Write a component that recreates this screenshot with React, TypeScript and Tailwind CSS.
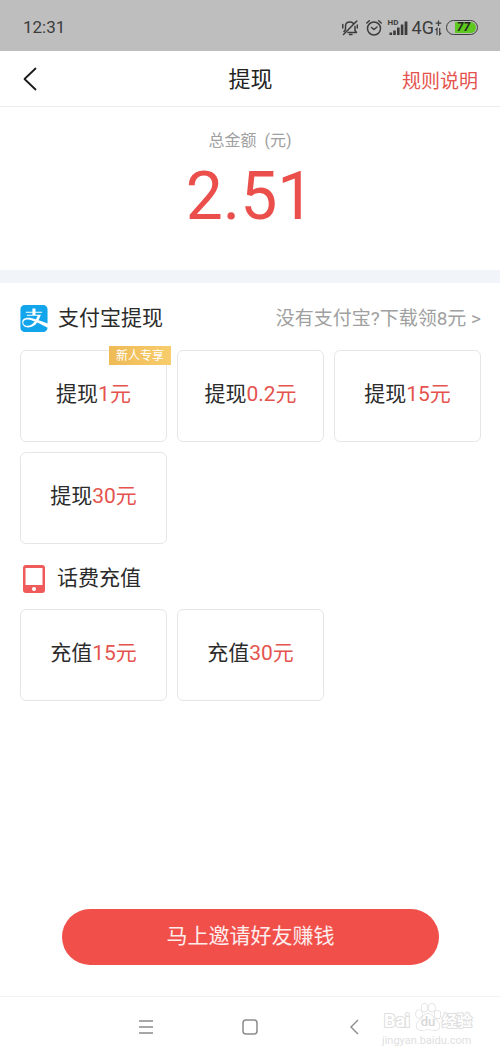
import React from "react";
import { FaAlipay } from "react-icons/fa";

interface Option {
  action: string;
  amount: string;
  tag?: string;
}

const withdrawOptions: Option[] = [
  { action: "提现", amount: "1元", tag: "新人专享" },
  { action: "提现", amount: "0.2元" },
  { action: "提现", amount: "15元" },
  { action: "提现", amount: "30元" },
];

const rechargeOptions: Option[] = [
  { action: "充值", amount: "15元" },
  { action: "充值", amount: "30元" },
];

function StatusBar() {
  return (
    <div className="flex h-[51px] items-center justify-between bg-[#bebebe] pt-1 pr-[22px] pl-[23px] text-[#3c3c3c]">
      <span className="text-[17px]">12:31</span>
      <div className="flex items-center">
        {/* Muted bell */}
        <svg className="mr-2 h-4 w-4" viewBox="0 0 16 16" fill="none" stroke="currentColor" strokeWidth="1.5" strokeLinecap="round" strokeLinejoin="round">
          <path d="M6 12.500h8.500L13 10.500V6.500M3.500 9.500V6C3.500 3.500 5.500 2 8 2c1.300 0 2.300.4 3.100 1.100M7.500 14.500h2.500M14.800 1 1.500 14.500M3.500 9.500 2 11.500M.8 4.500v3.500M15.300 5v3" />
        </svg>
        {/* Alarm */}
        <svg className="mr-1.5 h-4 w-4" viewBox="0 0 16 16" fill="none" stroke="currentColor" strokeWidth="1.5" strokeLinecap="round" strokeLinejoin="round">
          <circle cx="8" cy="8.500" r="6.500" />
          <path d="M5.500 7.500 8 9.500l3-2.500M.8 3 3.300.8M15.200 3 12.700.8" />
        </svg>
        {/* Signal */}
        <div className="relative mr-1 h-4 w-5">
          <span className="absolute -top-px left-0 text-[8px] leading-[8px] font-bold">HD</span>
          <svg className="h-4 w-5" viewBox="0 0 20 16" fill="currentColor">
            <path d="M1.500 12.500h2.600v2.500H1.500zM5.200 10.500h2.600v4.500H5.200zM9 7.500h2.600v7.500H9zM12.800 4.500h2.600v10.500h-2.600zM16.600 1.500h2.800v13.500h-2.800z" />
          </svg>
        </div>
        <span className="text-lg leading-4">4G</span>
        <svg className="mr-1 h-4 w-2" viewBox="0 0 8 16" fill="none" stroke="currentColor" strokeWidth="1.200">
          <path d="M4.500.5v5.500M1.700 3.200h5.600M3 15V8.500L1.500 10.200M5.700 8v6.500l1.500-1.700" />
        </svg>
        <div className="flex h-[15px] w-8 items-center rounded-full border border-[#3c3c3c] p-px pl-2">
          <span className="flex h-[11px] flex-1 items-center justify-center rounded-r-full bg-[#5fc81e] pr-1 text-xs leading-[11px] font-bold text-[#222] italic">
            77
          </span>
        </div>
      </div>
    </div>
  );
}

function PhoneIcon() {
  return (
    <svg className="h-7 w-[27px]" viewBox="0 0 27 28">
      <rect x="3" y="0" width="22" height="28" rx="3" fill="#ef5b5b" />
      <rect x="5.500" y="3" width="17" height="17" fill="#fff" />
      <circle cx="14" cy="24" r="2" fill="#fff" />
    </svg>
  );
}

function OptionGrid({ options }: { options: Option[] }) {
  return (
    <div className="grid grid-cols-3 gap-2.5">
      {options.map((option) => (
        <button
          key={option.action + option.amount}
          className="relative h-[92px] rounded-md border border-[#e6e6e6] bg-white pb-0.5 text-[21px] text-[#2b2b2b]"
        >
          {option.action}
          <span className="text-[#e5534e]">{option.amount}</span>
          {option.tag && (
            <span className="absolute -top-[5px] -right-[5px] flex h-[19px] w-[62px] items-center justify-center bg-gradient-to-r from-[#eebb55] to-[#f8cc6c] text-xs text-white">
              {option.tag}
            </span>
          )}
        </button>
      ))}
    </div>
  );
}

function Watermark() {
  return (
    <div className="absolute top-1.5 right-[26px] w-[92px]">
      <div className="flex h-7 items-end pl-0.5 font-bold text-white [paint-order:stroke] [-webkit-text-stroke:2px_#dedede]">
        <span className="w-[30px] text-lg leading-5">Bai</span>
        <span className="relative flex h-7 w-7 items-end justify-center">
          <svg className="absolute inset-0 h-7 w-7" viewBox="0 0 28 28" fill="#fff" stroke="#d6d6d6" strokeWidth="1.200">
            <ellipse cx="5" cy="11" rx="3" ry="4" />
            <ellipse cx="10.500" cy="4.800" rx="3" ry="4" />
            <ellipse cx="18" cy="4.800" rx="3" ry="4" />
            <ellipse cx="23.500" cy="11.500" rx="3" ry="4" />
            <path d="M14 10.500c-3 0-4.500 3-7 5.500-3 2.500-5 4.500-4.500 7.500.5 3 3 4 6 3.500 2-.3 3.500-.5 5.500-.5s3.500.2 5.500.5c3 .5 5.500-.5 6-3.500.5-3-1.500-5-4.500-7.500-2.500-2.500-4-5.500-7-5.500z" />
          </svg>
          <span className="relative text-[13px] leading-[18px] font-medium text-[#d6d6d6] [-webkit-text-stroke:0]">du</span>
        </span>
        <span className="text-[15px] leading-5">经验</span>
      </div>
      <div className="mt-1 text-[11px] leading-3 text-[#e0e0e0]">jingyan.baidu.com</div>
    </div>
  );
}

export default function App() {
  return (
    <div className="flex min-h-screen flex-col bg-white font-[Roboto,'Noto_Sans_CJK_SC',sans-serif]">
      <StatusBar />

      <header className="grid h-14 grid-cols-3 items-center border-b border-[#ececec] pr-[22px] pl-[23px]">
        <button aria-label="返回" className="justify-self-start">
          <svg className="h-6 w-4" viewBox="0 0 16 24" fill="none" stroke="#1a1a1a" strokeWidth="1.800" strokeLinecap="round" strokeLinejoin="round">
            <path d="M12.500 1.500 1.500 12l11 10.500" />
          </svg>
        </button>
        <h1 className="pt-0.5 text-center text-[22px] text-[#222]">提现</h1>
        <a href="#rules" className="justify-self-end pt-1.5 text-[19px] leading-7 whitespace-nowrap text-[#e5534e]">
          规则说明
        </a>
      </header>

      <section className="flex h-[163px] flex-col items-center pt-[22px]">
        <p className="text-base leading-6 text-[#a0a0a0]">总金额&nbsp; (元)</p>
        <p className="mt-1 text-[66px] leading-[80px] text-[#eb4f4b]">2.51</p>
      </section>

      <div className="h-[13px] bg-[#f1f4f8]" />

      <main className="flex flex-1 flex-col pr-[19px] pl-5">
        <div className="flex h-[67px] items-center pt-1">
          <FaAlipay className="h-[31px] w-[28px] text-[#12a5ec]" />
          <h2 className="ml-2.5 text-[21px] text-[#2b2b2b]">支付宝提现</h2>
          <a href="#download" className="ml-auto pt-0.5 text-[19px] text-[#a0a0a0]">
            没有支付宝?下载领8元 &gt;
          </a>
        </div>
        <OptionGrid options={withdrawOptions} />

        <div className="flex h-[65px] items-center pt-1">
          <PhoneIcon />
          <h2 className="ml-2.5 text-[21px] text-[#2b2b2b]">话费充值</h2>
        </div>
        <OptionGrid options={rechargeOptions} />

        <button className="mx-[42px] mt-auto mb-[31px] h-14 rounded-full bg-[#f04f4a] text-[21px] text-white/90">
          马上邀请好友赚钱
        </button>
      </main>

      <nav className="relative flex h-[61px] items-center justify-center gap-[88px] border-t border-[#f3f3f3] text-[#8a8a8a]">
        <button aria-label="菜单">
          <svg className="h-4 w-4" viewBox="0 0 16 16" stroke="currentColor" strokeWidth="1.300">
            <path d="M1 2h14M1 8h14M1 14h14" />
          </svg>
        </button>
        <button aria-label="主页">
          <svg className="h-4 w-4" viewBox="0 0 16 16" fill="none" stroke="currentColor" strokeWidth="1.500">
            <rect x="1" y="1" width="14" height="14" rx="3" />
          </svg>
        </button>
        <button aria-label="后退">
          <svg className="h-4 w-4" viewBox="0 0 16 16" fill="none" stroke="currentColor" strokeWidth="1.400">
            <path d="M12 1 5 8l7 7" />
          </svg>
        </button>
        <Watermark />
      </nav>
    </div>
  );
}
